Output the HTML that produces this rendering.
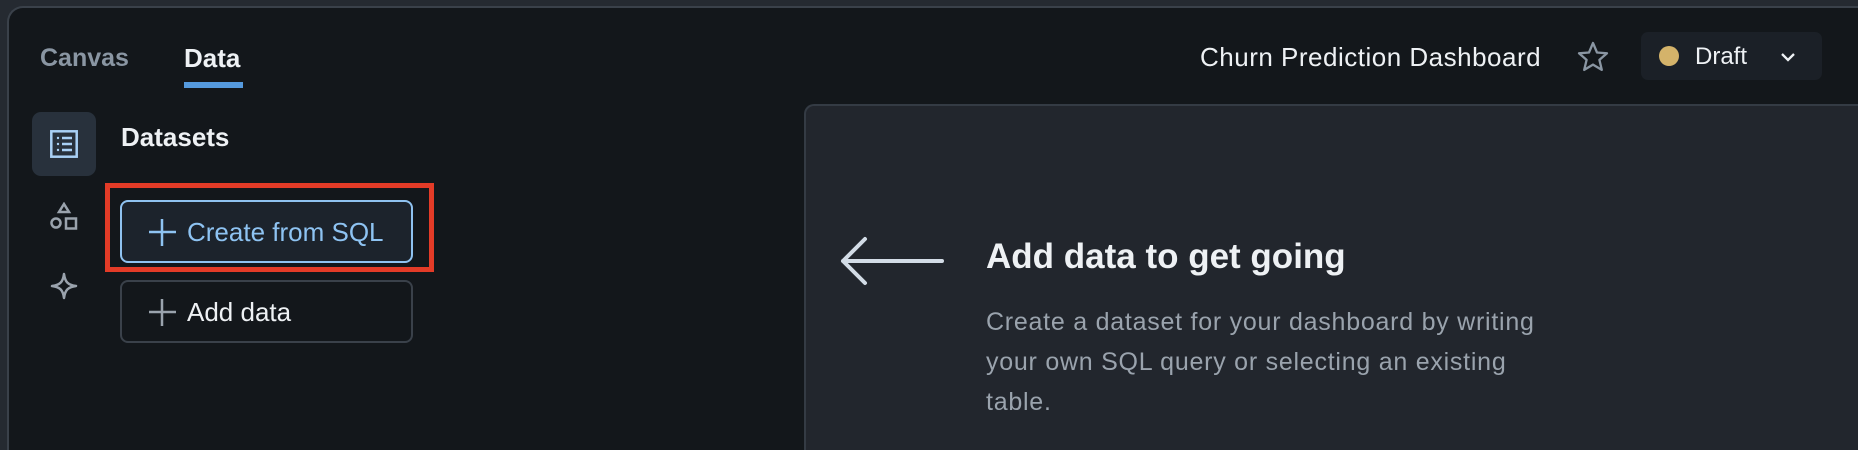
<!DOCTYPE html>
<html><head><meta charset="utf-8"><style>
html,body{margin:0;padding:0;width:1858px;height:450px;overflow:hidden}
body{background:#252a31;position:relative;font-family:"Liberation Sans",sans-serif}
.main{position:absolute;left:7px;top:6px;width:1851px;height:444px;background:#13171b;border:2px solid #3a414a;border-right:none;border-bottom:none;border-radius:16px 0 0 0;box-sizing:border-box}
.a{position:absolute;white-space:nowrap}
.panel{position:absolute;left:804px;top:104px;width:1054px;height:346px;background:#22262d;border:2px solid #343b44;border-right:none;border-bottom:none;border-radius:10px 0 0 0;box-sizing:border-box}
.btn{position:absolute;left:120px;width:293px;height:63px;box-sizing:border-box;border-radius:8px}
</style></head><body>
<div class="main"></div>
<div class="a" style="left:40px;top:44px;font-size:25px;font-weight:bold;color:#8a96a3">Canvas</div>
<div class="a" style="left:184px;top:43px;font-size:26px;font-weight:bold;color:#eef1f4">Data</div>
<div class="a" style="left:184px;top:82px;width:59px;height:6px;background:#559ade"></div>

<div class="a" style="left:32px;top:112px;width:64px;height:64px;background:#28313c;border-radius:9px"></div>
<svg class="a" style="left:50px;top:130px" width="28" height="28" viewBox="0 0 28 28" fill="none" stroke="#a9d0f5" stroke-width="2.5"><rect x="1.3" y="1.3" width="25.4" height="25.4"/><circle cx="8" cy="8" r="1.2" fill="#a9d0f5" stroke="none"/><circle cx="8" cy="14" r="1.2" fill="#a9d0f5" stroke="none"/><circle cx="8" cy="20" r="1.2" fill="#a9d0f5" stroke="none"/><path d="M12 8h10M12 14h10M12 20h10"/></svg>
<svg class="a" style="left:50px;top:202px" width="28" height="28" viewBox="0 0 28 28" fill="none" stroke="#9aa3ad" stroke-width="2.5"><path d="M14 2l5 8H9z"/><circle cx="6" cy="21" r="4.5"/><rect x="16" y="16.5" width="10" height="10"/></svg>
<svg class="a" style="left:50px;top:272px" width="28" height="28" viewBox="0 0 28 28" fill="none" stroke="#9aa3ad" stroke-width="2.5" stroke-linejoin="round"><path d="M14 2C15 10 18 13 26 14C18 15 15 18 14 26C13 18 10 15 2 14C10 13 13 10 14 2z"/></svg>

<div class="a" style="left:121px;top:122px;font-size:26px;font-weight:bold;color:#eef1f4">Datasets</div>
<div class="a" style="left:105px;top:183px;width:329px;height:89px;border:5px solid #e33b27;box-sizing:border-box"></div>
<div class="btn" style="top:200px;background:#1c232c;border:2px solid #8fc2f0"></div>
<svg class="a" style="left:148px;top:218px" width="28" height="28" viewBox="0 0 28 28" stroke="#8ec3f2" stroke-width="2.5"><path d="M14 1v27M1 14h27"/></svg>
<div class="a" style="left:187px;top:217px;font-size:26px;color:#8ec3f2">Create from SQL</div>
<div class="btn" style="top:280px;border:2px solid #3a414a"></div>
<svg class="a" style="left:148px;top:298px" width="28" height="28" viewBox="0 0 28 28" stroke="#9aa3ad" stroke-width="2.5"><path d="M14 1v27M1 14h27"/></svg>
<div class="a" style="left:187px;top:297px;font-size:26px;color:#eef1f4">Add data</div>

<div class="a" style="left:1200px;top:42px;font-size:26px;letter-spacing:0.5px;color:#eef1f4">Churn Prediction Dashboard</div>
<svg class="a" style="left:1577px;top:41px" width="32" height="31" viewBox="0 0 32 31" fill="none" stroke="#8a96a3" stroke-width="2.3" stroke-linejoin="round"><path d="M16 2l4 9.5 10 .8-7.6 6.6 2.4 10L16 23.6 7.2 28.9l2.4-10L2 12.3l10-.8z"/></svg>
<div class="a" style="left:1641px;top:32px;width:181px;height:48px;background:#1b2027;border-radius:7px"></div>
<div class="a" style="left:1659px;top:46px;width:20px;height:20px;border-radius:50%;background:#d4b36a"></div>
<div class="a" style="left:1695px;top:43px;font-size:24px;color:#eef1f4">Draft</div>
<svg class="a" style="left:1779px;top:51px" width="18" height="12" viewBox="0 0 18 12" fill="none" stroke="#eef1f4" stroke-width="2.3"><path d="M3 3l6 6 6-6"/></svg>

<div class="panel"></div>
<svg class="a" style="left:839px;top:236px" width="106" height="50" viewBox="0 0 106 50" fill="none" stroke="#d3dce6" stroke-width="4" stroke-linecap="round" stroke-linejoin="round"><path d="M103 25H4M26 3L4 25l22 22"/></svg>
<div class="a" style="left:986px;top:237px;font-size:35px;font-weight:bold;color:#eef1f4">Add data to get going</div>
<div class="a" style="left:986px;top:302px;font-size:25px;letter-spacing:0.75px;line-height:40px;color:#9aa3ad">Create a dataset for your dashboard by writing<br>your own SQL query or selecting an existing<br>table.</div>
</body></html>
